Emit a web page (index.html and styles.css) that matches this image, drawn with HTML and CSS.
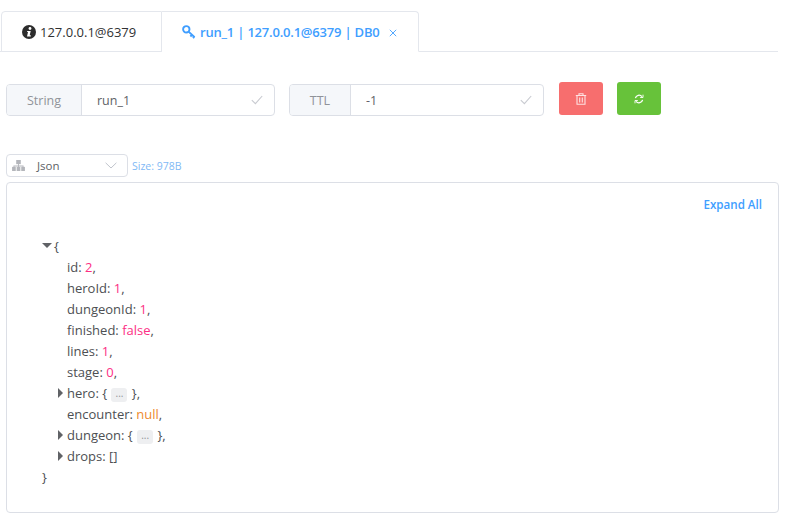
FILE: index.html
```html
<!DOCTYPE html>
<html lang="en">
<head>
<meta charset="utf-8">
<title>run_1</title>
<link rel="stylesheet" href="styles.css">
</head>
<body>
<main class="page">
  <div class="tabs">
    <div class="tab">
      <svg class="tab-icon" width="14" height="14" viewBox="0 0 14 14"><circle cx="7" cy="7" r="7" fill="#2c2c2c"/><circle cx="8" cy="3.5" r="1.4" fill="#fff"/><path d="M5.3 5.9h3.4l-1 4.3h1.1v1.2H5l1-4.3H5z" fill="#fff"/></svg>
      <span>127.0.0.1@6379</span>
    </div>
    <div class="tab active">
      <svg class="tab-icon" width="14" height="14" viewBox="0 0 14 14" fill="none" stroke="#409eff" stroke-width="1.9"><circle cx="4.3" cy="4.3" r="3.2"/><path d="M6.6 6.6l6 5.6M10 9.8l-1.6 1.7M12.2 11.8l-1.2 1.3"/></svg>
      <span>run_1 | 127.0.0.1@6379 | DB0</span>
      <svg class="tab-close" width="8" height="8" viewBox="0 0 8 8" stroke="#409eff" stroke-width="0.9"><path d="M.8.8l6.4 6.4M7.2.8L.8 7.2"/></svg>
    </div>
  </div>

  <div class="form-row">
    <div class="group group-key">
      <div class="addon addon-key">String</div>
      <div class="field"><span>run_1</span>
        <svg class="check" width="12" height="10" viewBox="0 0 12 10" fill="none" stroke="#c8cad0" stroke-width="1.1"><path d="M.8 5.2l3.6 3.4L11.2 1"/></svg>
      </div>
    </div>
    <div class="group group-ttl">
      <div class="addon addon-ttl">TTL</div>
      <div class="field"><span>-1</span>
        <svg class="check" width="12" height="10" viewBox="0 0 12 10" fill="none" stroke="#c8cad0" stroke-width="1.1"><path d="M.8 5.2l3.6 3.4L11.2 1"/></svg>
      </div>
    </div>
    <div class="btn btn-danger">
      <svg width="12" height="12" viewBox="0 0 12 12" fill="none" stroke="#fff" stroke-opacity=".8" stroke-width="1.1"><path d="M.8 2.5h10.4M4 2.3V.8h4v1.5M2 2.6v8.6h8V2.6M4.7 4.5v5M7.3 4.5v5"/></svg>
    </div>
    <div class="btn btn-success">
      <svg width="10" height="10" viewBox="0 0 12 12" fill="none" stroke="#fff" stroke-width="1.5"><path d="M1.7 5A4.4 4.4 0 0 1 9.5 3.2M10.3 7a4.4 4.4 0 0 1-7.8 1.8"/><path d="M10.8 .8v3.4H7.4M1.2 11.2V7.8h3.4" stroke-width="1.1"/></svg>
    </div>
  </div>

  <div class="view-row">
    <div class="select">
      <svg class="select-icon" width="13" height="11" viewBox="0 0 14 12" fill="#b4b6bb"><rect x="4.5" y="0" width="5" height="4.5"/><rect x="0" y="7.5" width="4" height="4.5"/><rect x="5" y="7.5" width="4" height="4.5"/><rect x="10" y="7.5" width="4" height="4.5"/><path d="M6.5 4h1v2h5v2h-1V7h-4v1h-1V7h-4v1h-1V6h5z"/></svg>
      <span class="select-value">Json</span>
      <svg class="select-caret" width="12" height="7" viewBox="0 0 12 7" fill="none" stroke="#c0c4cc" stroke-width="1"><path d="M.6.8L6 6l5.4-5.2"/></svg>
    </div>
    <span class="size">Size: 978B</span>
  </div>

  <section class="panel">
    <div class="panel-head"><span class="expand">Expand All</span></div>
    <div class="json">
      <div class="line root"><i class="caret down"></i>{</div>
      <div class="line">id: <b class="num">2</b>,</div>
      <div class="line">heroId: <b class="num">1</b>,</div>
      <div class="line">dungeonId: <b class="num">1</b>,</div>
      <div class="line">finished: <b class="num">false</b>,</div>
      <div class="line">lines: <b class="num">1</b>,</div>
      <div class="line">stage: <b class="num">0</b>,</div>
      <div class="line"><i class="caret right"></i>hero: { <span class="more">...</span> },</div>
      <div class="line">encounter: <b class="nul">null</b>,</div>
      <div class="line"><i class="caret right"></i>dungeon: { <span class="more">...</span> },</div>
      <div class="line"><i class="caret right"></i>drops: []</div>
      <div class="line end">}</div>
    </div>
  </section>
</main>
</body>
</html>
```

FILE: styles.css
```css
* { box-sizing: border-box; }
html, body { margin: 0; background: #fff; }
body {
  font-family: "Open Sans", "Noto Sans", sans-serif;
  font-size: 12.5px;
  color: #606266;
  width: 785px;
  height: 521px;
  overflow: hidden;
}
.page { width: 779px; padding-top: 11px; }

.tabs {
  display: flex;
  height: 41px;
  margin-right: 1px;
  padding-left: 1px;
  border-bottom: 1px solid #e4e7ed;
}
.tab {
  display: flex;
  align-items: center;
  height: 41px;
  padding: 0 0 0 20px;
  width: 161px;
  font-size: 13px;
  font-weight: 500;
  color: #303133;
  white-space: nowrap;
  background: #fff;
  border: 1px solid #e4e7ed;
  border-radius: 4px 0 0 0;
}
.tab-icon { margin-right: 4px; flex: none; }
.tab.active {
  width: 257px;
  padding-left: 20px;
  color: #409eff;
  font-weight: 600;
  letter-spacing: -0.2px;
  border-left: 0;
  border-bottom-color: #fff;
  border-radius: 0 4px 0 0;
}
.tab-close { margin-left: 9px; margin-top: 2px; }

.form-row {
  display: flex;
  align-items: flex-start;
  margin-top: 30px;
  padding-left: 6px;
  height: 34px;
}
.group {
  display: flex;
  height: 32px;
  margin-top: 2px;
  border: 1px solid #dcdfe6;
  border-radius: 4px;
  overflow: hidden;
}
.group-key { width: 269px; margin-right: 14px; }
.group-ttl { width: 255px; margin-right: 15px; }
.addon {
  display: flex;
  align-items: center;
  justify-content: center;
  background: #f5f7fa;
  color: #909399;
  border-right: 1px solid #dcdfe6;
  flex: none;
}
.addon-key { width: 75px; }
.addon-ttl { width: 61px; }
.field {
  flex: 1;
  display: flex;
  align-items: center;
  justify-content: space-between;
  padding: 0 11px 0 15px;
}
.btn {
  display: flex;
  align-items: center;
  justify-content: center;
  width: 44px;
  height: 33px;
  border-radius: 3px;
}
.btn-danger { background: #f76e6e; margin-right: 14px; }
.btn-success { background: #67c23a; }

.view-row {
  display: flex;
  align-items: center;
  margin-top: 38px;
  padding-left: 6px;
  height: 23px;
}
.select {
  display: flex;
  align-items: center;
  width: 122px;
  height: 23px;
  padding: 0 10px 0 5px;
  border: 1px solid #dcdfe6;
  border-radius: 4px;
  font-size: 11.5px;
}
.select-value { margin-left: 12px; flex: 1; }
.size { margin-left: 4px; font-size: 10.5px; color: #7fb9f5; }

.panel {
  margin: 5px 0 0 6px;
  width: 773px;
  height: 331px;
  border: 1px solid #dcdfe6;
  border-radius: 4px;
  padding: 14px 16px 0 35px;
}
.panel-head { display: flex; justify-content: flex-end; height: 34px; }
.expand { font-size: 11.6px; font-weight: 600; color: #409eff; line-height: 16px; }
.json { padding-top: 5px; font-size: 13px; color: #4d4f53; }
.line { position: relative; height: 21px; line-height: 21px; padding-left: 25px; white-space: pre; }
.line.root { padding-left: 12px; }
.line.end { padding-left: 0; }
.num { font-weight: 400; color: #fc2f84; }
.nul { font-weight: 400; color: #ee8a2c; }
.caret { position: absolute; width: 0; height: 0; border-style: solid; border-color: transparent; }
.caret.down { left: 0; top: 7px; border-width: 5px 5px 0 5px; border-top-color: #606266; }
.caret.right { left: 16px; top: 5px; border-width: 5px 0 5px 5px; border-left-color: #606266; }
.more {
  display: inline-block;
  width: 16px;
  height: 14px;
  line-height: 10px;
  margin: 0 1px;
  text-align: center;
  vertical-align: 1px;
  font-size: 10px;
  color: #909399;
  background: #eeeff1;
  border-radius: 3px;
}
```
